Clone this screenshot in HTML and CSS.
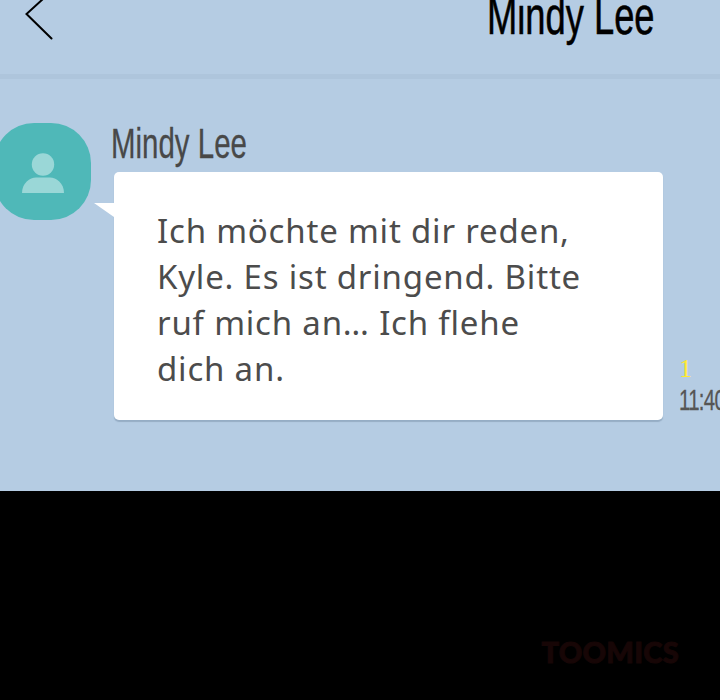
FILE: index.html
```html
<!DOCTYPE html>
<html lang="de">
<head>
<meta charset="utf-8">
<title>Mindy Lee</title>
<link rel="stylesheet" href="styles.css">
</head>
<body>
<div class="screen">
  <header class="topbar">
    <svg class="back" width="30" height="42" viewBox="0 0 30 42" aria-hidden="true"><path d="M18.5 -1.5 L1.5 14 L26.5 38.5" fill="none" stroke="#000" stroke-width="2" stroke-linecap="round"/></svg>
    <h1 class="title">Mindy Lee</h1>
  </header>
  <main class="chat">
    <div class="avatar">
      <svg width="42" height="44" viewBox="0 0 42 44" aria-hidden="true"><circle cx="21" cy="14.5" r="11.2" fill="#9ad7d7"/><path d="M0 43 C0 33 8 27.5 14 27.5 H28 C34 27.5 42 33 42 43 Z" fill="#9ad7d7"/></svg>
    </div>
    <div class="message">
      <div class="sender">Mindy Lee</div>
      <div class="line">
        <div class="bubble">
          <span class="tail"></span>
          <p class="text">Ich möchte mit dir reden,<br>Kyle. Es ist dringend. Bitte<br>ruf mich an… Ich flehe<br>dich an.</p>
        </div>
        <div class="meta">
          <span class="unread">1</span>
          <span class="time">11:40</span>
        </div>
      </div>
    </div>
  </main>
  <footer class="footer">
    <span class="logo">TOOMICS</span>
  </footer>
</div>
</body>
</html>
```
FILE: styles.css
```css
html, body {
  margin: 0;
  padding: 0;
  background: #000;
}
.screen {
  width: 720px;
  height: 700px;
  overflow: hidden;
  display: flex;
  flex-direction: column;
  background: #b5cce3;
}
.topbar {
  height: 74px;
  flex: none;
  border-bottom: 5px solid #aec5dc;
  display: flex;
  justify-content: space-between;
  align-items: flex-start;
  padding: 0 65px 0 25px;
}
.back {
  display: block;
  flex: none;
  overflow: visible;
}
.title {
  margin: -17px 0 0;
  font: 400 53px/66px "Liberation Sans", sans-serif;
  color: #000;
  white-space: nowrap;
  transform: scaleX(.685);
  transform-origin: right center;
  -webkit-text-stroke: .6px #000;
}
.chat {
  flex: 1;
  display: flex;
  align-items: flex-start;
  padding: 44px 0 0;
  margin-left: -6px;
  min-height: 0;
}
.avatar {
  width: 97px;
  height: 97px;
  flex: none;
  border-radius: 40px;
  background: #4fb8b8;
  display: flex;
  align-items: center;
  justify-content: center;
}
.message {
  margin-left: 23px;
  flex: 1;
  min-width: 0;
}
.sender {
  margin: -5px 0 0 -3px;
  height: 54px;
  font: 400 43px/50px "Liberation Sans", sans-serif;
  color: #484848;
  white-space: nowrap;
  transform: scaleX(.685);
  transform-origin: left center;
  -webkit-text-stroke: .3px #484848;
}
.line {
  display: flex;
  align-items: flex-end;
}
.bubble {
  position: relative;
  width: 549px;
  height: 248px;
  box-sizing: border-box;
  flex: none;
  padding: 36px 0 0 43px;
  background: #fff;
  border-radius: 5px;
  box-shadow: 0 2px 1px rgba(110, 135, 160, .45);
}
.tail {
  position: absolute;
  left: -20px;
  top: 31px;
  width: 20px;
  height: 14px;
  background: #fff;
  clip-path: polygon(0 0, 100% 0, 100% 100%);
}
.text {
  margin: 0;
  font: 400 33px/46px "Noto Sans", sans-serif;
  letter-spacing: .8px;
  color: #4c4c4c;
  white-space: nowrap;
}
.meta {
  display: flex;
  flex-direction: column;
  margin: 0 0 2px 16px;
  white-space: nowrap;
}
.unread {
  font: 400 26px/26px "Liberation Serif", serif;
  color: #ffe92e;
}
.time {
  font: 400 30px/36px "Liberation Sans", sans-serif;
  color: #555;
  letter-spacing: -1px;
  transform: scaleX(.68);
  transform-origin: left center;
  -webkit-text-stroke: .3px #555;
}
.footer {
  height: 209px;
  flex: none;
  background: #000;
  display: flex;
  justify-content: flex-end;
  align-items: flex-start;
  padding: 145px 41px 0 0;
  box-sizing: border-box;
}
.logo {
  font: 900 29px/32px Lato, sans-serif;
  color: #170606;
  letter-spacing: .3px;
  -webkit-text-stroke: 1px #170606;
}
```
